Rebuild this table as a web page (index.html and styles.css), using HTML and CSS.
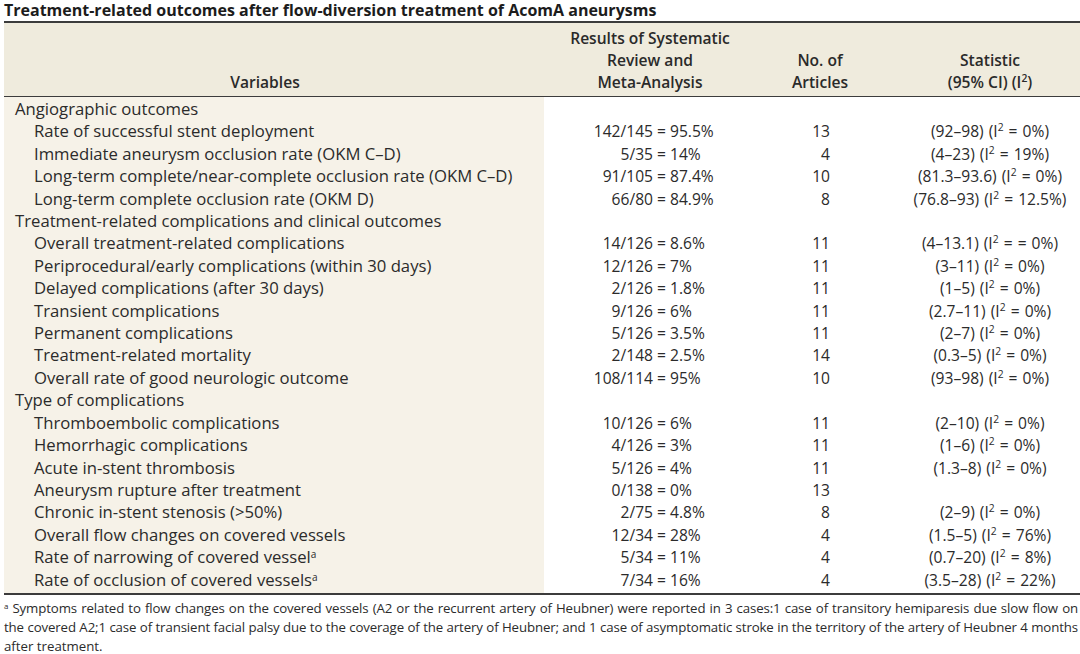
FILE: index.html
```html
<!DOCTYPE html>
<html lang="en">
<head>
<meta charset="utf-8">
<title>Treatment-related outcomes</title>
<link rel="stylesheet" href="styles.css">
</head>
<body>
<div class="page">
  <h1 class="title">Treatment-related outcomes after flow-diversion treatment of AcomA aneurysms</h1>
  <table class="data">
    <colgroup>
      <col class="w-var">
      <col class="w-res">
      <col class="w-art">
      <col class="w-stat">
    </colgroup>
    <thead>
      <tr>
        <th class="c-var">Variables</th>
        <th class="c-res">Results of Systematic<br>Review and<br>Meta-Analysis</th>
        <th class="c-art">No. of<br>Articles</th>
        <th class="c-stat">Statistic<br>(95% CI) (I<sup>2</sup>)</th>
      </tr>
    </thead>
    <tbody>
      <tr class="group"><td class="c-var">Angiographic outcomes</td><td class="c-res"></td><td class="c-art"></td><td class="c-stat"></td></tr>
      <tr><td class="c-var sub">Rate of successful stent deployment</td><td class="c-res"><span class="frac">142/145</span> = 95.5%</td><td class="c-art">13</td><td class="c-stat">(92–98) (I<sup>2</sup> = 0%)</td></tr>
      <tr><td class="c-var sub">Immediate aneurysm occlusion rate (OKM C–D)</td><td class="c-res"><span class="frac">5/35</span> = 14%</td><td class="c-art">4</td><td class="c-stat">(4–23) (I<sup>2</sup> = 19%)</td></tr>
      <tr><td class="c-var sub">Long-term complete/near-complete occlusion rate (OKM C–D)</td><td class="c-res"><span class="frac">91/105</span> = 87.4%</td><td class="c-art">10</td><td class="c-stat">(81.3–93.6) (I<sup>2</sup> = 0%)</td></tr>
      <tr><td class="c-var sub">Long-term complete occlusion rate (OKM D)</td><td class="c-res"><span class="frac">66/80</span> = 84.9%</td><td class="c-art">8</td><td class="c-stat">(76.8–93) (I<sup>2</sup> = 12.5%)</td></tr>
      <tr class="group"><td class="c-var">Treatment-related complications and clinical outcomes</td><td class="c-res"></td><td class="c-art"></td><td class="c-stat"></td></tr>
      <tr><td class="c-var sub">Overall treatment-related complications</td><td class="c-res"><span class="frac">14/126</span> = 8.6%</td><td class="c-art">11</td><td class="c-stat">(4–13.1) (I<sup>2</sup> = = 0%)</td></tr>
      <tr><td class="c-var sub">Periprocedural/early complications (within 30 days)</td><td class="c-res"><span class="frac">12/126</span> = 7%</td><td class="c-art">11</td><td class="c-stat">(3–11) (I<sup>2</sup> = 0%)</td></tr>
      <tr><td class="c-var sub">Delayed complications (after 30 days)</td><td class="c-res"><span class="frac">2/126</span> = 1.8%</td><td class="c-art">11</td><td class="c-stat">(1–5) (I<sup>2</sup> = 0%)</td></tr>
      <tr><td class="c-var sub">Transient complications</td><td class="c-res"><span class="frac">9/126</span> = 6%</td><td class="c-art">11</td><td class="c-stat">(2.7–11) (I<sup>2</sup> = 0%)</td></tr>
      <tr><td class="c-var sub">Permanent complications</td><td class="c-res"><span class="frac">5/126</span> = 3.5%</td><td class="c-art">11</td><td class="c-stat">(2–7) (I<sup>2</sup> = 0%)</td></tr>
      <tr><td class="c-var sub">Treatment-related mortality</td><td class="c-res"><span class="frac">2/148</span> = 2.5%</td><td class="c-art">14</td><td class="c-stat">(0.3–5) (I<sup>2</sup> = 0%)</td></tr>
      <tr><td class="c-var sub">Overall rate of good neurologic outcome</td><td class="c-res"><span class="frac">108/114</span> = 95%</td><td class="c-art">10</td><td class="c-stat">(93–98) (I<sup>2</sup> = 0%)</td></tr>
      <tr class="group"><td class="c-var">Type of complications</td><td class="c-res"></td><td class="c-art"></td><td class="c-stat"></td></tr>
      <tr><td class="c-var sub">Thromboembolic complications</td><td class="c-res"><span class="frac">10/126</span> = 6%</td><td class="c-art">11</td><td class="c-stat">(2–10) (I<sup>2</sup> = 0%)</td></tr>
      <tr><td class="c-var sub">Hemorrhagic complications</td><td class="c-res"><span class="frac">4/126</span> = 3%</td><td class="c-art">11</td><td class="c-stat">(1–6) (I<sup>2</sup> = 0%)</td></tr>
      <tr><td class="c-var sub">Acute in-stent thrombosis</td><td class="c-res"><span class="frac">5/126</span> = 4%</td><td class="c-art">11</td><td class="c-stat">(1.3–8) (I<sup>2</sup> = 0%)</td></tr>
      <tr><td class="c-var sub">Aneurysm rupture after treatment</td><td class="c-res"><span class="frac">0/138</span> = 0%</td><td class="c-art">13</td><td class="c-stat"></td></tr>
      <tr><td class="c-var sub">Chronic in-stent stenosis (&gt;50%)</td><td class="c-res"><span class="frac">2/75</span> = 4.8%</td><td class="c-art">8</td><td class="c-stat">(2–9) (I<sup>2</sup> = 0%)</td></tr>
      <tr><td class="c-var sub">Overall flow changes on covered vessels</td><td class="c-res"><span class="frac">12/34</span> = 28%</td><td class="c-art">4</td><td class="c-stat">(1.5–5) (I<sup>2</sup> = 76%)</td></tr>
      <tr><td class="c-var sub">Rate of narrowing of covered vessel<sup class="fn">a</sup></td><td class="c-res"><span class="frac">5/34</span> = 11%</td><td class="c-art">4</td><td class="c-stat">(0.7–20) (I<sup>2</sup> = 8%)</td></tr>
      <tr><td class="c-var sub">Rate of occlusion of covered vessels<sup class="fn">a</sup></td><td class="c-res"><span class="frac">7/34</span> = 16%</td><td class="c-art">4</td><td class="c-stat">(3.5–28) (I<sup>2</sup> = 22%)</td></tr>
    </tbody>
  </table>
  <p class="note">
    <span class="line full"><sup class="fn">a</sup> Symptoms related to flow changes on the covered vessels (A2 or the recurrent artery of Heubner) were reported in 3 cases:1 case of transitory hemiparesis due slow flow on</span>
    <span class="line full">the covered A2;1 case of transient facial palsy due to the coverage of the artery of Heubner; and 1 case of asymptomatic stroke in the territory of the artery of Heubner 4 months</span>
    <span class="line last">after treatment.</span>
  </p>
</div>
</body>
</html>
```

FILE: styles.css
```css
html, body {
  margin: 0;
  padding: 0;
  background: #ffffff;
}

body {
  font-family: "Open Sans", "Noto Sans", sans-serif;
  color: #2b2b2b;
  width: 1080px;
  height: 654px;
  overflow: hidden;
}

.page {
  padding-left: 4px;
}

.title {
  margin: 0;
  padding-top: 1px;
  height: 20px;
  font-size: 16px;
  line-height: 18px;
  font-weight: 700;
  color: #1c1c1c;
}

.data {
  width: 1076px;
  border-collapse: collapse;
  table-layout: fixed;
  border-top: 2px solid #3c3c3c;
  border-bottom: 2px solid #3c3c3c;
  font-size: 15.6px;
}

.w-var { width: 540px; }
.w-res { width: 196px; }
.w-art { width: 160px; }
.w-stat { width: 180px; }

.data th {
  background: #efebdd;
  font-weight: 600;
  font-size: 15.6px;
  line-height: 22px;
  padding: 4px 0 3px;
  vertical-align: bottom;
  text-align: center;
  color: #2a2a2a;
  border-bottom: 1.5px solid #3c3c3c;
}

.data td {
  line-height: 22.4px;
  padding: 0;
  white-space: nowrap;
  vertical-align: middle;
}

.data tbody tr:first-child td {
  padding-top: 1px;
}

.data tbody tr:last-child td {
  padding-bottom: 2px;
}

th.c-var {
  padding-right: 18px;
}

td.c-var {
  background: #f6f2e8;
  padding-left: 11px;
  text-align: left;
  font-size: 16.7px;
}

td.c-var.sub {
  padding-left: 30px;
}

th.c-res {
  padding-left: 16px;
}

td.c-res {
  text-align: left;
  padding-left: 47px;
}

.frac {
  display: inline-block;
  width: 62px;
  text-align: right;
}

td.c-art {
  text-align: right;
  padding-right: 70px;
}

td.c-stat {
  text-align: center;
  word-spacing: 1px;
}

sup {
  font-size: 0.66em;
  line-height: 0;
  vertical-align: 0.55em;
}

sup.fn {
  font-size: 0.6em;
}

.note {
  margin: 4px 0 0;
  width: 1074px;
  font-size: 13.25px;
  line-height: 19.5px;
  color: #2b2b2b;
  letter-spacing: -0.12px;
  word-spacing: -1px;
}

.line {
  display: block;
  white-space: nowrap;
  text-align: left;
}

.line.full {
  text-align: justify;
  text-align-last: justify;
}

.line.last {
  word-spacing: 0;
  letter-spacing: 0;
  line-height: 17px;
}
```
